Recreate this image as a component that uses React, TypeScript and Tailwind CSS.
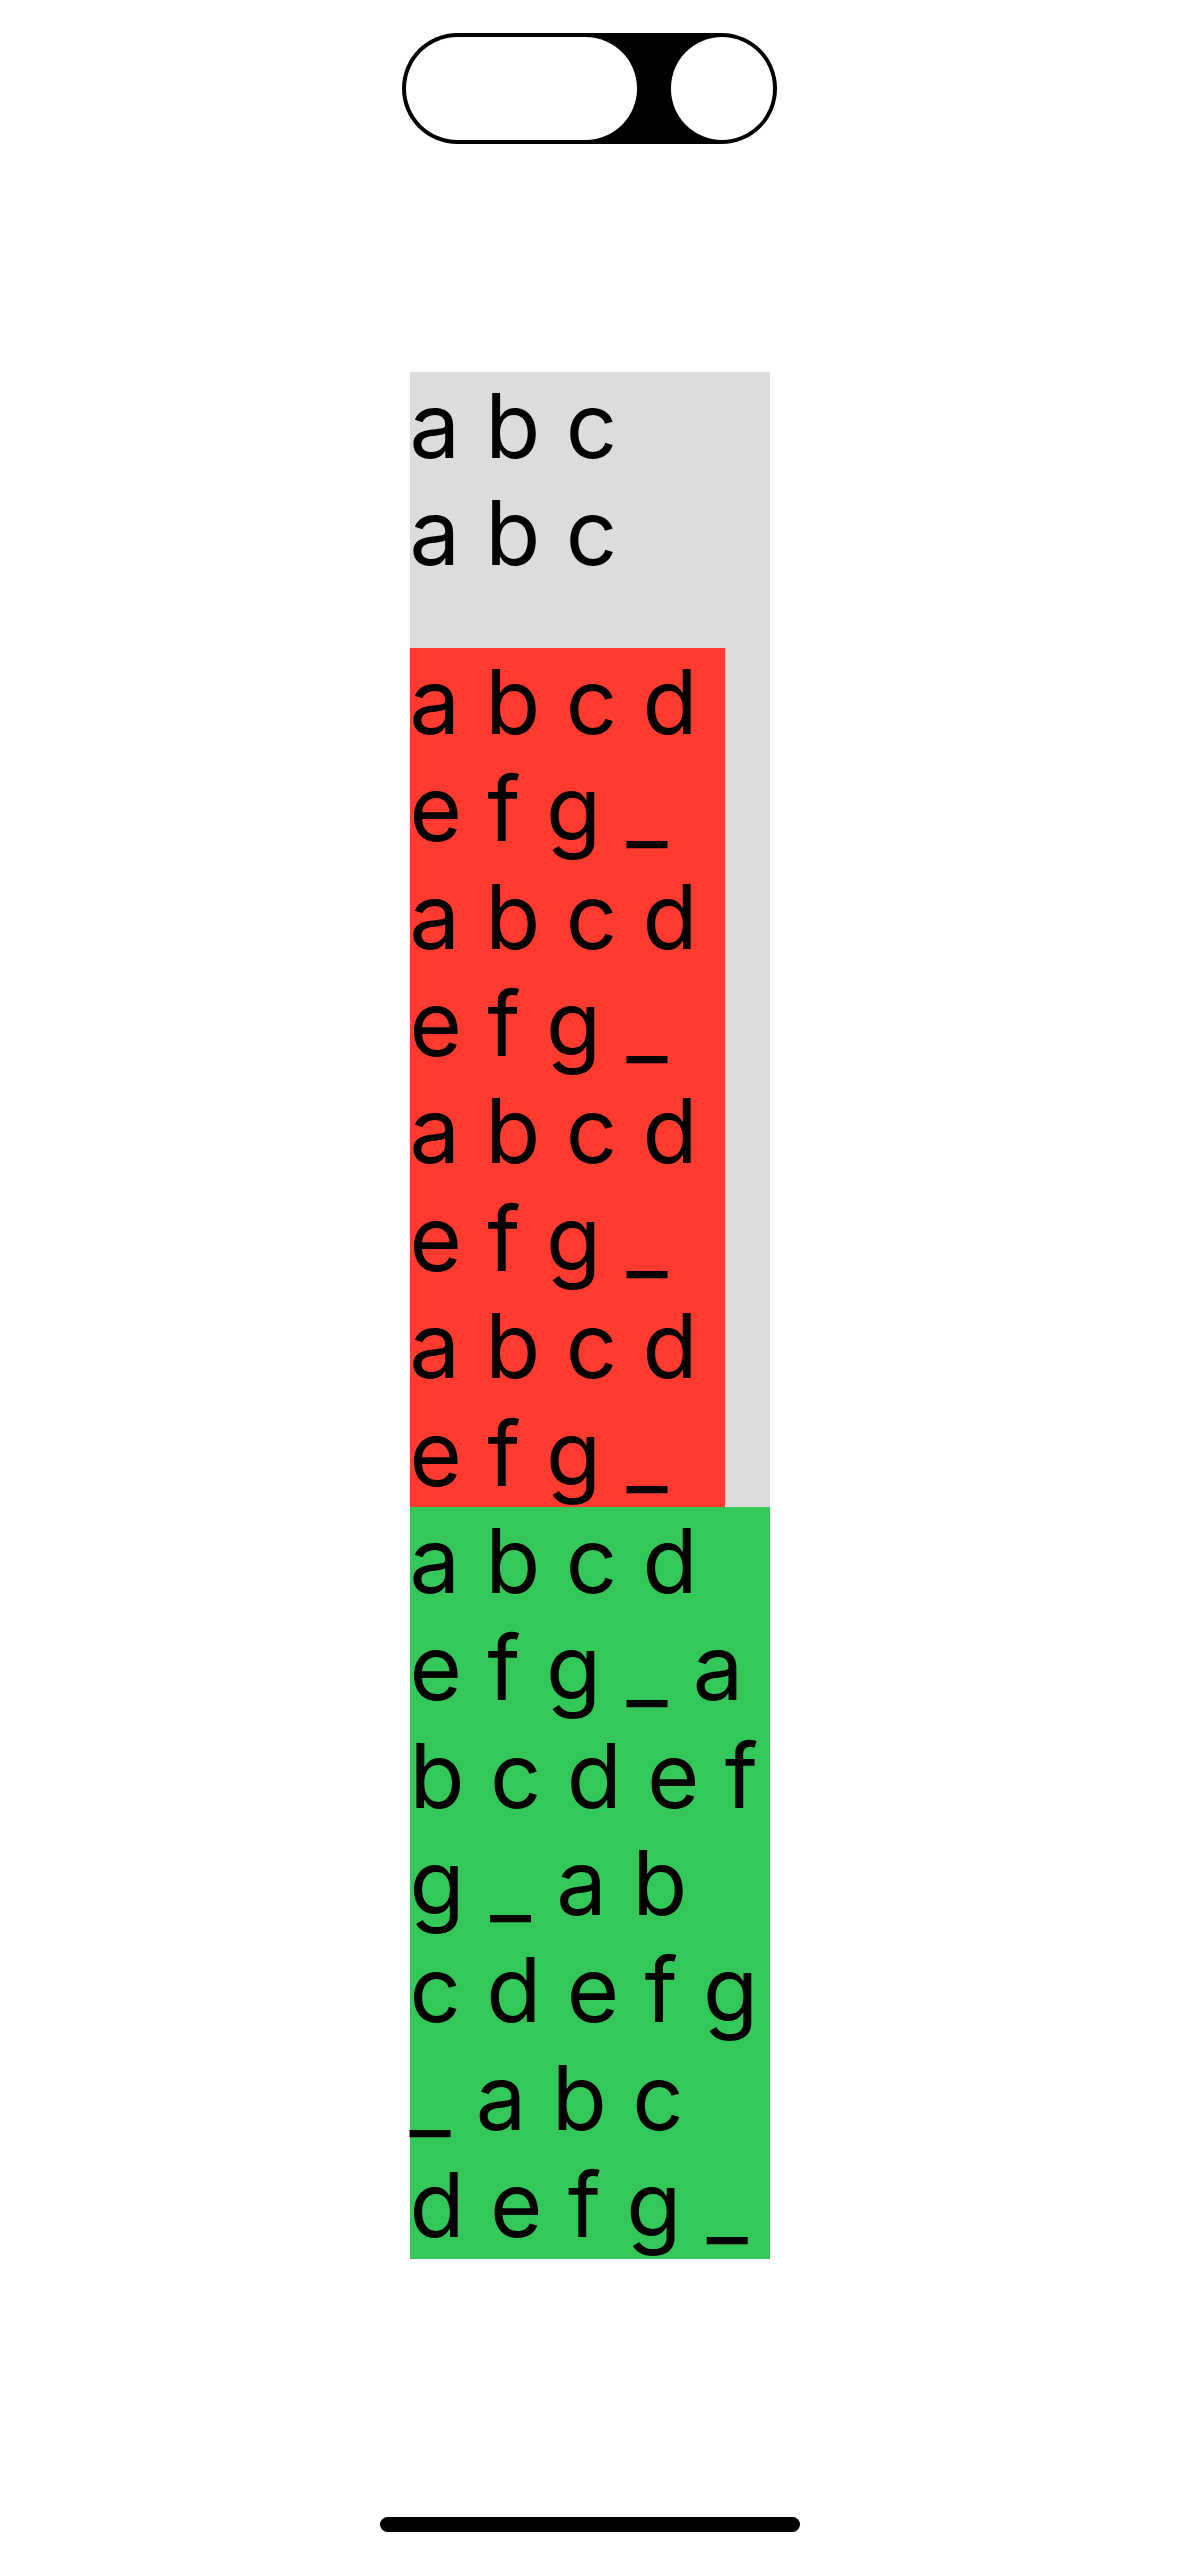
const grayLines = ['a b c', 'a b c']

const redLines = [
  'a b c d',
  'e f g _',
  'a b c d',
  'e f g _',
  'a b c d',
  'e f g _',
  'a b c d',
  'e f g _',
]

const greenLines = [
  'a b c d',
  'e f g _ a',
  'b c d e f',
  'g _ a b',
  'c d e f g',
  '_ a b c',
  'd e f g _',
]

function TextLines({ lines }: { lines: string[] }) {
  return (
    <>
      {lines.map((line, i) => (
        <div key={i} className="h-[107.4px] whitespace-pre text-[90px] leading-[107.4px]">
          {line}
        </div>
      ))}
    </>
  )
}

export default function App() {
  return (
    <div
      className="flex min-h-[2556px] w-[1179px] flex-col bg-white text-black"
      style={{ fontFamily: 'Inter, "Noto Sans", sans-serif' }}
    >
      {/* Island */}
      <div className="flex justify-center pt-[33px]">
        <div className="flex h-[111px] w-[375px] items-stretch justify-between rounded-full bg-black p-[4px]">
          <div className="w-[231px] rounded-full bg-white" />
          <div className="w-[102px] rounded-full bg-white" />
        </div>
      </div>

      {/* Content */}
      <div className="mx-auto mt-[228px] w-[360px]">
        <div className="bg-[#dcdcdf]">
          <TextLines lines={grayLines} />
          <div className="h-[61px]" />
          <div className="w-[315px] bg-[#ff3b30]">
            <TextLines lines={redLines} />
          </div>
        </div>
        <div className="bg-[#34c759]">
          <TextLines lines={greenLines} />
        </div>
      </div>

      {/* Home indicator */}
      <div className="mt-auto flex justify-center pb-[24px]">
        <div className="h-[15px] w-[420px] rounded-full bg-black" />
      </div>
    </div>
  )
}
